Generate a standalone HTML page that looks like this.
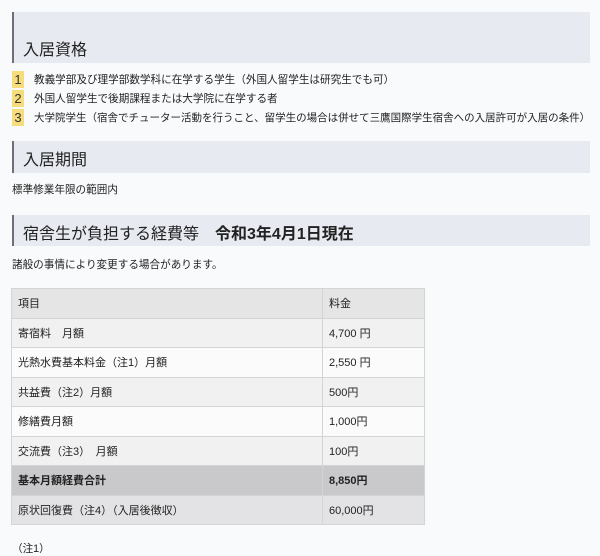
<!DOCTYPE html>
<html><head><meta charset="utf-8"><style>
body{margin:0;width:600px;height:555px;overflow:hidden;background:#f9fafc;font-family:"Liberation Sans","Noto Sans CJK JP",sans-serif;color:#222;}
.h{position:absolute;left:12px;width:578px;background:#e7eaf0;border-left:2px solid #6b7078;box-sizing:border-box;font-size:16px;color:#222;}
.t{position:absolute;font-size:10.6px;white-space:nowrap;}
.n{position:absolute;left:12px;width:12px;height:17px;background:#f7dc7c;font-size:13px;text-align:center;line-height:17px;color:#333;}
table{position:absolute;left:11px;top:288px;border-collapse:collapse;width:414px;font-size:11px;}
td{border:1px solid #d4d4d4;height:28.5px;padding:0 0 0 6px;}
</style></head><body>
<div class="h" style="top:12px;height:51px;"><span style="position:absolute;left:9px;top:24px;">入居資格</span></div>
<div class="n" style="top:71px">1</div><div class="t" style="left:34px;top:72px">教義学部及び理学部数学科に在学する学生（外国人留学生は研究生でも可）</div>
<div class="n" style="top:90px">2</div><div class="t" style="left:34px;top:91px">外国人留学生で後期課程または大学院に在学する者</div>
<div class="n" style="top:109px">3</div><div class="t" style="left:34px;top:110px;font-size:10.5px">大学院学生（宿舎でチューター活動を行うこと、留学生の場合は併せて三鷹国際学生宿舎への入居許可が入居の条件）</div>
<div class="h" style="top:141px;height:32px;"><span style="position:absolute;left:9px;top:5px;">入居期間</span></div>
<div class="t" style="left:12px;top:182px">標準修業年限の範囲内</div>
<div class="h" style="top:215px;height:31px;"><span style="position:absolute;left:9px;top:5px;">宿舎生が負担する経費等　<b>令和3年4月1日現在</b></span></div>
<div class="t" style="left:12px;top:257px">諸般の事情により変更する場合があります。</div>
<table>
<tr style="background:#e5e5e5"><td style="width:304px">項目</td><td>料金</td></tr>
<tr style="background:#f1f1f1"><td>寄宿料　月額</td><td>4,700 円</td></tr>
<tr style="background:#fbfbfb"><td>光熱水費基本料金（注1）月額</td><td>2,550 円</td></tr>
<tr style="background:#f1f1f1"><td>共益費（注2）月額</td><td>500円</td></tr>
<tr style="background:#fbfbfb"><td>修繕費月額</td><td>1,000円</td></tr>
<tr style="background:#f1f1f1"><td>交流費（注3）　月額</td><td>100円</td></tr>
<tr style="background:#c9c9cb;font-weight:bold"><td>基本月額経費合計</td><td>8,850円</td></tr>
<tr style="background:#e3e3e5"><td>原状回復費（注4）（入居後徴収）</td><td>60,000円</td></tr>
</table>
<div class="t" style="left:12px;top:541px">（注1）</div>
</body></html>
